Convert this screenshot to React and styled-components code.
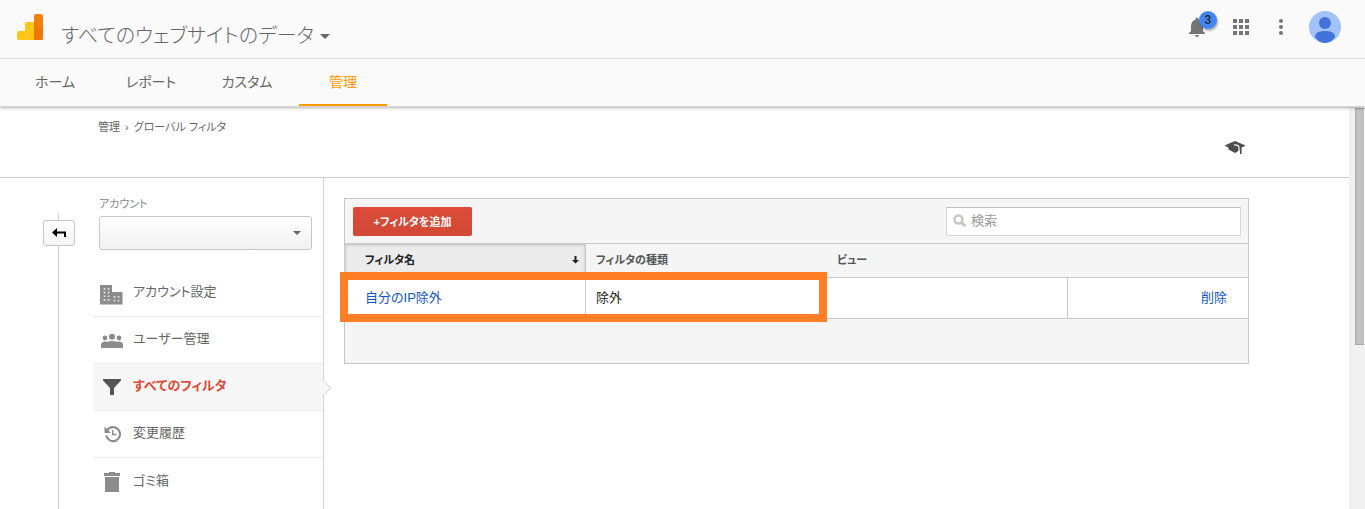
import React from 'react';
import styled, { createGlobalStyle } from 'styled-components';

const GlobalStyle = createGlobalStyle`
	* {
		box-sizing: border-box;
	}
	body {
		margin: 0;
		background: #fff;
		color: #222;
		font-family: 'Liberation Sans', 'Noto Sans CJK JP', sans-serif;
		font-size: 13px;
		font-feature-settings: 'palt';
	}
	button,
	input,
	select {
		font: inherit;
		font-feature-settings: inherit;
	}
	a {
		text-decoration: none;
	}
`;

const tabs = ['ホーム', 'レポート', 'カスタム', '管理'];

const BuildingIcon = () => (
	<svg width='24' height='24' viewBox='0 0 24 24' fill='#8c8c8c'>
		<path d='M0 4h12v7h10.500v12.500H0z' />
		<path
			d='M4.500 7v14M8.500 7v14M14.500 15v6M18.500 15v6'
			stroke='#e6e6e6'
			strokeWidth='1.700'
			strokeDasharray='1.700 2'
		/>
	</svg>
);

const PeopleIcon = () => (
	<svg width='24' height='24' viewBox='0 0 24 24' fill='#8c8c8c'>
		<circle cx='12' cy='8.700' r='3' />
		<circle cx='5' cy='10' r='2.400' />
		<circle cx='19' cy='10' r='2.400' />
		<path d='M1 20v-3.500c0-2 2-3 4-3 .8 0 1.500.1 2.200.4 1.300-.6 3-.9 4.800-.9s3.500.3 4.800.9c.7-.3 1.400-.4 2.200-.4 2 0 4 1 4 3V20z' />
	</svg>
);

const FunnelIcon = () => (
	<svg width='24' height='24' viewBox='0 0 24 24' fill='#555'>
		<path d='M3 4h18v1.500l-7 7.500v7h-4v-7L3 5.500z' />
	</svg>
);

const HistoryIcon = () => (
	<svg width='24' height='24' viewBox='0 0 24 24' fill='none' stroke='#8c8c8c'>
		<path d='M7.500 7.800A7 7 0 1 1 6.200 13.600' strokeWidth='2.200' />
		<path d='M12.700 8v4.500H16.500' strokeWidth='1.500' />
		<path d='M4.500 4.500v6.500H11z' fill='#8c8c8c' stroke='none' />
	</svg>
);

const TrashIcon = () => (
	<svg width='24' height='24' viewBox='0 0 24 24' fill='#8c8c8c'>
		<path d='M4 3h5V2h6v1h5v3H4zM5 7h14v15H5z' />
	</svg>
);

const menu = [
	{ label: 'アカウント設定', icon: BuildingIcon },
	{ label: 'ユーザー管理', icon: PeopleIcon },
	{ label: 'すべてのフィルタ', icon: FunnelIcon, active: true },
	{ label: '変更履歴', icon: HistoryIcon },
	{ label: 'ゴミ箱', icon: TrashIcon },
];

const App = () => {
	return (
		<Page>
			<GlobalStyle />
			<TopBar>
				<Header>
					<Logo width='26' height='26' viewBox='0 0 26 26' aria-label='Analytics'>
						<path d='M8 10a2 2 0 0 1 2-2h8v18H2a2 2 0 0 1-2-2v-5a2 2 0 0 1 2-2h6z' fill='#ffc517' />
						<path d='M17 2a2 2 0 0 1 2-2h5a2 2 0 0 1 2 2v22a2 2 0 0 1-2 2h-7z' fill='#f57f0e' />
						<path d='M17 8l9 9v7a2 2 0 0 1-2 2h-7z' fill='#ef7807' />
					</Logo>
					<ViewPicker type='button'>
						すべてのウェブサイトのデータ
						<Caret />
					</ViewPicker>
					<Tools>
						<BellButton type='button' aria-label='通知'>
							<svg width='24' height='24' viewBox='0 0 24 24' fill='#757575'>
								<path d='M12 22a2 2 0 0 0 2-2h-4c0 1.100.9 2 2 2zm6-6v-5c0-3.070-1.640-5.640-4.500-6.320V4a1.500 1.500 0 0 0-3 0v.68C7.630 5.360 6 7.920 6 11v5l-2 2v1h16v-1z' />
							</svg>
							<Badge>3</Badge>
						</BellButton>
						<IconButton type='button' aria-label='アプリ'>
							<svg width='24' height='24' viewBox='0 0 24 24' fill='#757575'>
								<path d='M4 4h4v4H4zm6 0h4v4h-4zm6 0h4v4h-4zM4 10h4v4H4zm6 0h4v4h-4zm6 0h4v4h-4zM4 16h4v4H4zm6 0h4v4h-4zm6 0h4v4h-4z' />
							</svg>
						</IconButton>
						<IconButton type='button' aria-label='メニュー'>
							<svg width='24' height='24' viewBox='0 0 24 24' fill='#757575'>
								<circle cx='12' cy='6' r='2' />
								<circle cx='12' cy='12' r='2' />
								<circle cx='12' cy='18' r='2' />
							</svg>
						</IconButton>
						<IconButton type='button' aria-label='プロフィール'>
							<svg width='32' height='32' viewBox='0 0 32 32'>
								<circle cx='16' cy='16' r='16' fill='#a1c2fa' />
								<circle cx='16' cy='12' r='6' fill='#4272db' />
								<path d='M6 26c0-4 4-6 10-6s10 2 10 6c-2.500 3.700-6 6-10 6s-7.500-2.300-10-6z' fill='#4272db' />
							</svg>
						</IconButton>
					</Tools>
				</Header>
				<Tabs>
					{tabs.map((tab) => (
						<Tab key={tab} href='#' $active={tab === '管理'}>
							{tab}
						</Tab>
					))}
				</Tabs>
			</TopBar>
			<Body>
				<Content>
					<SubHeader>
						<Crumbs>
							<a href='#'>管理</a>
							<span>›</span>
							<a href='#'>グローバル フィルタ</a>
						</Crumbs>
						<HelpButton type='button' aria-label='ヘルプ'>
							<svg width='22' height='14' viewBox='0 0 22 14'>
								<path d='M11 1l10.500 4.500L17 8v1.500L11 13 4.500 9.500V7.800L.5 5.500z' fill='#4d4d4d' />
								<path d='M10 5.200c2.500-.7 5 .3 5 2.300V11' fill='none' stroke='#fff' strokeWidth='1.200' />
								<path d='M16 6h1.600v8H16z' fill='#4d4d4d' />
							</svg>
						</HelpButton>
					</SubHeader>
					<Columns>
						<Rail>
							<BackButton type='button' aria-label='戻る'>
								<svg width='14' height='10' viewBox='0 0 14 10' fill='#000'>
									<path d='M0 4.500L5 0v3.500h9V9h-2V5.500H5V9z' />
								</svg>
							</BackButton>
						</Rail>
						<Sidebar>
							<Account>
								<label htmlFor='account'>アカウント</label>
								<SelectBox>
									<select id='account'>
										<option></option>
									</select>
									<Caret $small />
								</SelectBox>
							</Account>
							{menu.map(({ label, icon: Icon, active }) => (
								<MenuItem key={label} href='#' $active={active}>
									<Icon />
									<MenuLabel>{label}</MenuLabel>
								</MenuItem>
							))}
						</Sidebar>
						<Main>
							<Panel>
								<Toolbar>
									<AddButton type='button'>+フィルタを追加</AddButton>
									<Search>
										<svg width='14' height='14' viewBox='0 0 14 14' fill='none' stroke='#c6c6c6'>
											<circle cx='5.500' cy='5.500' r='4' strokeWidth='2.400' />
											<path d='M8.500 8.500l4 4' strokeWidth='3' />
										</svg>
										<input type='text' placeholder='検索' aria-label='検索' />
									</Search>
								</Toolbar>
								<TableWrap>
									<Table>
										<colgroup>
											<Col />
											<Col />
											<Col />
											<col />
										</colgroup>
										<thead>
											<tr>
												<SortedTh>
													<SortLabel>
														フィルタ名
														<svg width='7' height='9' viewBox='0 0 7 9' fill='#222'>
															<path d='M2.500 1h2v4H7L3.500 8.500 0 5h2.500z' />
														</svg>
													</SortLabel>
												</SortedTh>
												<Th>フィルタの種類</Th>
												<Th>ビュー</Th>
												<Th />
											</tr>
										</thead>
										<tbody>
											<tr>
												<NameTd>
													<a href='#'>自分のIP除外</a>
												</NameTd>
												<Td>除外</Td>
												<Td />
												<ActionTd>
													<a href='#'>削除</a>
												</ActionTd>
											</tr>
										</tbody>
									</Table>
									<Highlight />
								</TableWrap>
								<PanelFooter />
							</Panel>
						</Main>
					</Columns>
				</Content>
				<Scrollbar>
					<Thumb />
				</Scrollbar>
			</Body>
		</Page>
	);
};

export default App;

const Page = styled.div`
	display: flex;
	flex-direction: column;
	height: 100vh;
	overflow: hidden;
`;

const TopBar = styled.header`
	position: relative;
	flex: none;
	background: #fafafa;
	border-bottom: 1px solid #d6d6d6;
	box-shadow: 0 1px 3px rgba(0, 0, 0, 0.3);
`;

const Header = styled.div`
	display: flex;
	align-items: center;
	height: 59px;
	padding: 0 24px 4px 17px;
	border-bottom: 1px solid #ddd;
`;

const Logo = styled.svg`
	flex: none;
	margin-right: 18px;
`;

const Caret = styled.span`
	width: 0;
	border: ${(p) => (p.$small ? '4px' : '5px')} solid transparent;
	border-top-color: #666;
	border-bottom: 0;
`;

const ViewPicker = styled.button`
	display: flex;
	align-items: center;
	gap: 6px;
	padding: 18px 0 0;
	border: 0;
	background: none;
	color: #666;
	font-size: 20px;
	font-weight: 300;
	line-height: 28px;
`;

const Tools = styled.div`
	display: flex;
	align-items: center;
	gap: 16px;
	margin-left: auto;
`;

const IconButton = styled.button`
	display: flex;
	padding: 0;
	border: 0;
	background: none;
`;

const BellButton = styled(IconButton)`
	position: relative;
	width: 28px;
`;

const Badge = styled.span`
	position: absolute;
	top: -4px;
	left: 14px;
	width: 18px;
	height: 18px;
	border-radius: 50%;
	background: #4285f4;
	box-shadow: 1px 2px 2px rgba(0, 0, 0, 0.3);
	color: #222;
	font-family: Roboto, sans-serif;
	font-size: 12px;
	font-weight: 500;
	line-height: 18px;
	text-align: center;
`;

const Tabs = styled.nav`
	display: flex;
	gap: 8px;
	padding-left: 11px;
`;

const Tab = styled.a`
	width: 88px;
	height: 47px;
	border-bottom: 2px solid ${(p) => (p.$active ? '#ff9800' : 'transparent')};
	color: ${(p) => (p.$active ? '#ff9800' : '#666')};
	font-size: 14px;
	line-height: 46px;
	text-align: center;
`;

const Body = styled.div`
	display: flex;
	flex: 1;
	min-height: 0;
`;

const Content = styled.div`
	display: flex;
	flex: 1;
	flex-direction: column;
	min-width: 0;
`;

const SubHeader = styled.div`
	display: flex;
	flex: none;
	justify-content: space-between;
	height: 71px;
	padding: 10px 103px 0 98px;
	border-bottom: 1px solid #ccc;
`;

const Crumbs = styled.div`
	display: flex;
	gap: 5px;
	height: 20px;
	color: #666;
	font-size: 11px;
	line-height: 20px;

	a {
		color: inherit;
	}
`;

const HelpButton = styled(IconButton)`
	align-items: center;
`;

const Columns = styled.div`
	display: flex;
	flex: 1;
	min-height: 0;
`;

const Rail = styled.div`
	flex: none;
	width: 93px;
	margin-top: 35px;
	padding: 7px 0 0 43px;
	background: linear-gradient(#ccc, #ccc) 58px 0 / 1px 100% no-repeat;
`;

const BackButton = styled.button`
	display: flex;
	align-items: center;
	justify-content: center;
	width: 32px;
	height: 26px;
	padding: 0;
	border: 1px solid #c6c6c6;
	border-radius: 3px;
	background: linear-gradient(#fff, #f4f4f4);
`;

const Sidebar = styled.nav`
	flex: none;
	width: 231px;
	border-right: 1px solid #d4d4d4;
`;

const Account = styled.div`
	padding: 16px 11px 20px 6px;

	label {
		display: block;
		height: 22px;
		color: #888;
		font-size: 11px;
		line-height: 20px;
	}
`;

const SelectBox = styled.div`
	display: flex;
	align-items: center;
	height: 34px;
	padding-right: 10px;
	border: 1px solid #c6c6c6;
	border-radius: 3px;
	background: linear-gradient(#fff, #f1f1f1);

	select {
		flex: 1;
		height: 100%;
		border: 0;
		background: none;
		appearance: none;
	}
`;

const MenuItem = styled.a`
	position: relative;
	display: flex;
	align-items: center;
	gap: 9px;
	height: 47px;
	padding-left: 7px;
	border-bottom: 1px solid #eee;
	background: ${(p) => (p.$active ? '#f7f7f7' : 'transparent')};
	color: ${(p) => (p.$active ? '#dd4b39' : '#666')};
	font-weight: ${(p) => (p.$active ? 'bold' : 'normal')};

	&:last-child {
		border-bottom: 0;
	}

	/* pointer on the selected row */
	&::after {
		content: '';
		display: ${(p) => (p.$active ? 'block' : 'none')};
		position: absolute;
		top: 18px;
		right: -6px;
		width: 11px;
		height: 11px;
		border: 1px solid #ddd;
		border-left: 0;
		border-bottom: 0;
		background: #f7f7f7;
		transform: rotate(45deg);
	}
`;

const MenuLabel = styled.span`
	padding-bottom: 2px;
	line-height: 20px;
`;

const Main = styled.main`
	flex: 1;
	min-width: 0;
	padding: 20px 100px 0 20px;
`;

const Panel = styled.section`
	border: 1px solid #c8c8c8;
	background: #f5f5f5;
`;

const Toolbar = styled.div`
	display: flex;
	align-items: center;
	justify-content: space-between;
	height: 45px;
	padding: 0 7px 0 8px;
	border-bottom: 1px solid #c8c8c8;
`;

const AddButton = styled.button`
	width: 119px;
	height: 29px;
	padding: 0;
	border: 0;
	border-radius: 2px;
	background: linear-gradient(#dd4b39, #d14836);
	color: #fff;
	font-size: 11px;
	font-weight: bold;
`;

const Search = styled.div`
	display: flex;
	align-items: center;
	gap: 4px;
	width: 295px;
	height: 29px;
	padding: 0 6px;
	border: 1px solid #d9d9d9;
	border-top-color: #c0c0c0;
	background: #fff;

	input {
		flex: 1;
		min-width: 0;
		height: 25px;
		padding: 0 0 2px;
		border: 0;
		background: none;
		outline: 0;
	}
	input::placeholder {
		color: #999;
	}
`;

const TableWrap = styled.div`
	position: relative;
`;

const Table = styled.table`
	width: 100%;
	border-collapse: separate;
	border-spacing: 0;
	table-layout: fixed;
`;

const Col = styled.col`
	width: 241px;
`;

const Th = styled.th`
	height: 34px;
	padding: 0 10px 2px;
	border-bottom: 1px solid #c8c8c8;
	color: #555;
	font-size: 11px;
	line-height: 16px;
	text-align: left;
`;

const SortedTh = styled(Th)`
	padding: 0 6px 2px 20px;
	border-right: 1px solid #c8c8c8;
	background: #ebebeb;
	box-shadow: inset 0 1px 3px rgba(0, 0, 0, 0.2);
	color: #222;
`;

const SortLabel = styled.div`
	display: flex;
	align-items: center;
	justify-content: space-between;
`;

const Td = styled.td`
	height: 41px;
	padding: 0 10px;
	border-right: 1px solid #c8c8c8;
	border-bottom: 1px solid #c8c8c8;
	background: #fff;
	line-height: 20px;

	a {
		color: #15c;
	}
`;

const NameTd = styled(Td)`
	padding-left: 20px;
`;

const ActionTd = styled(Td)`
	padding-right: 21px;
	border-right: 0;
	text-align: right;
`;

const PanelFooter = styled.div`
	height: 44px;
`;

const Highlight = styled.div`
	position: absolute;
	top: 28px;
	left: -5px;
	width: 487px;
	height: 50px;
	border: 8px solid #ff7f27;
	pointer-events: none;
`;

const Scrollbar = styled.div`
	flex: none;
	width: 16px;
	padding: 1px 1px 0 6px;
	background: #f1f1f1;
`;

const Thumb = styled.div`
	height: 59%;
	border: 1px solid #a8a8a8;
	border-right: 0;
	background: #c1c1c1;
`;
